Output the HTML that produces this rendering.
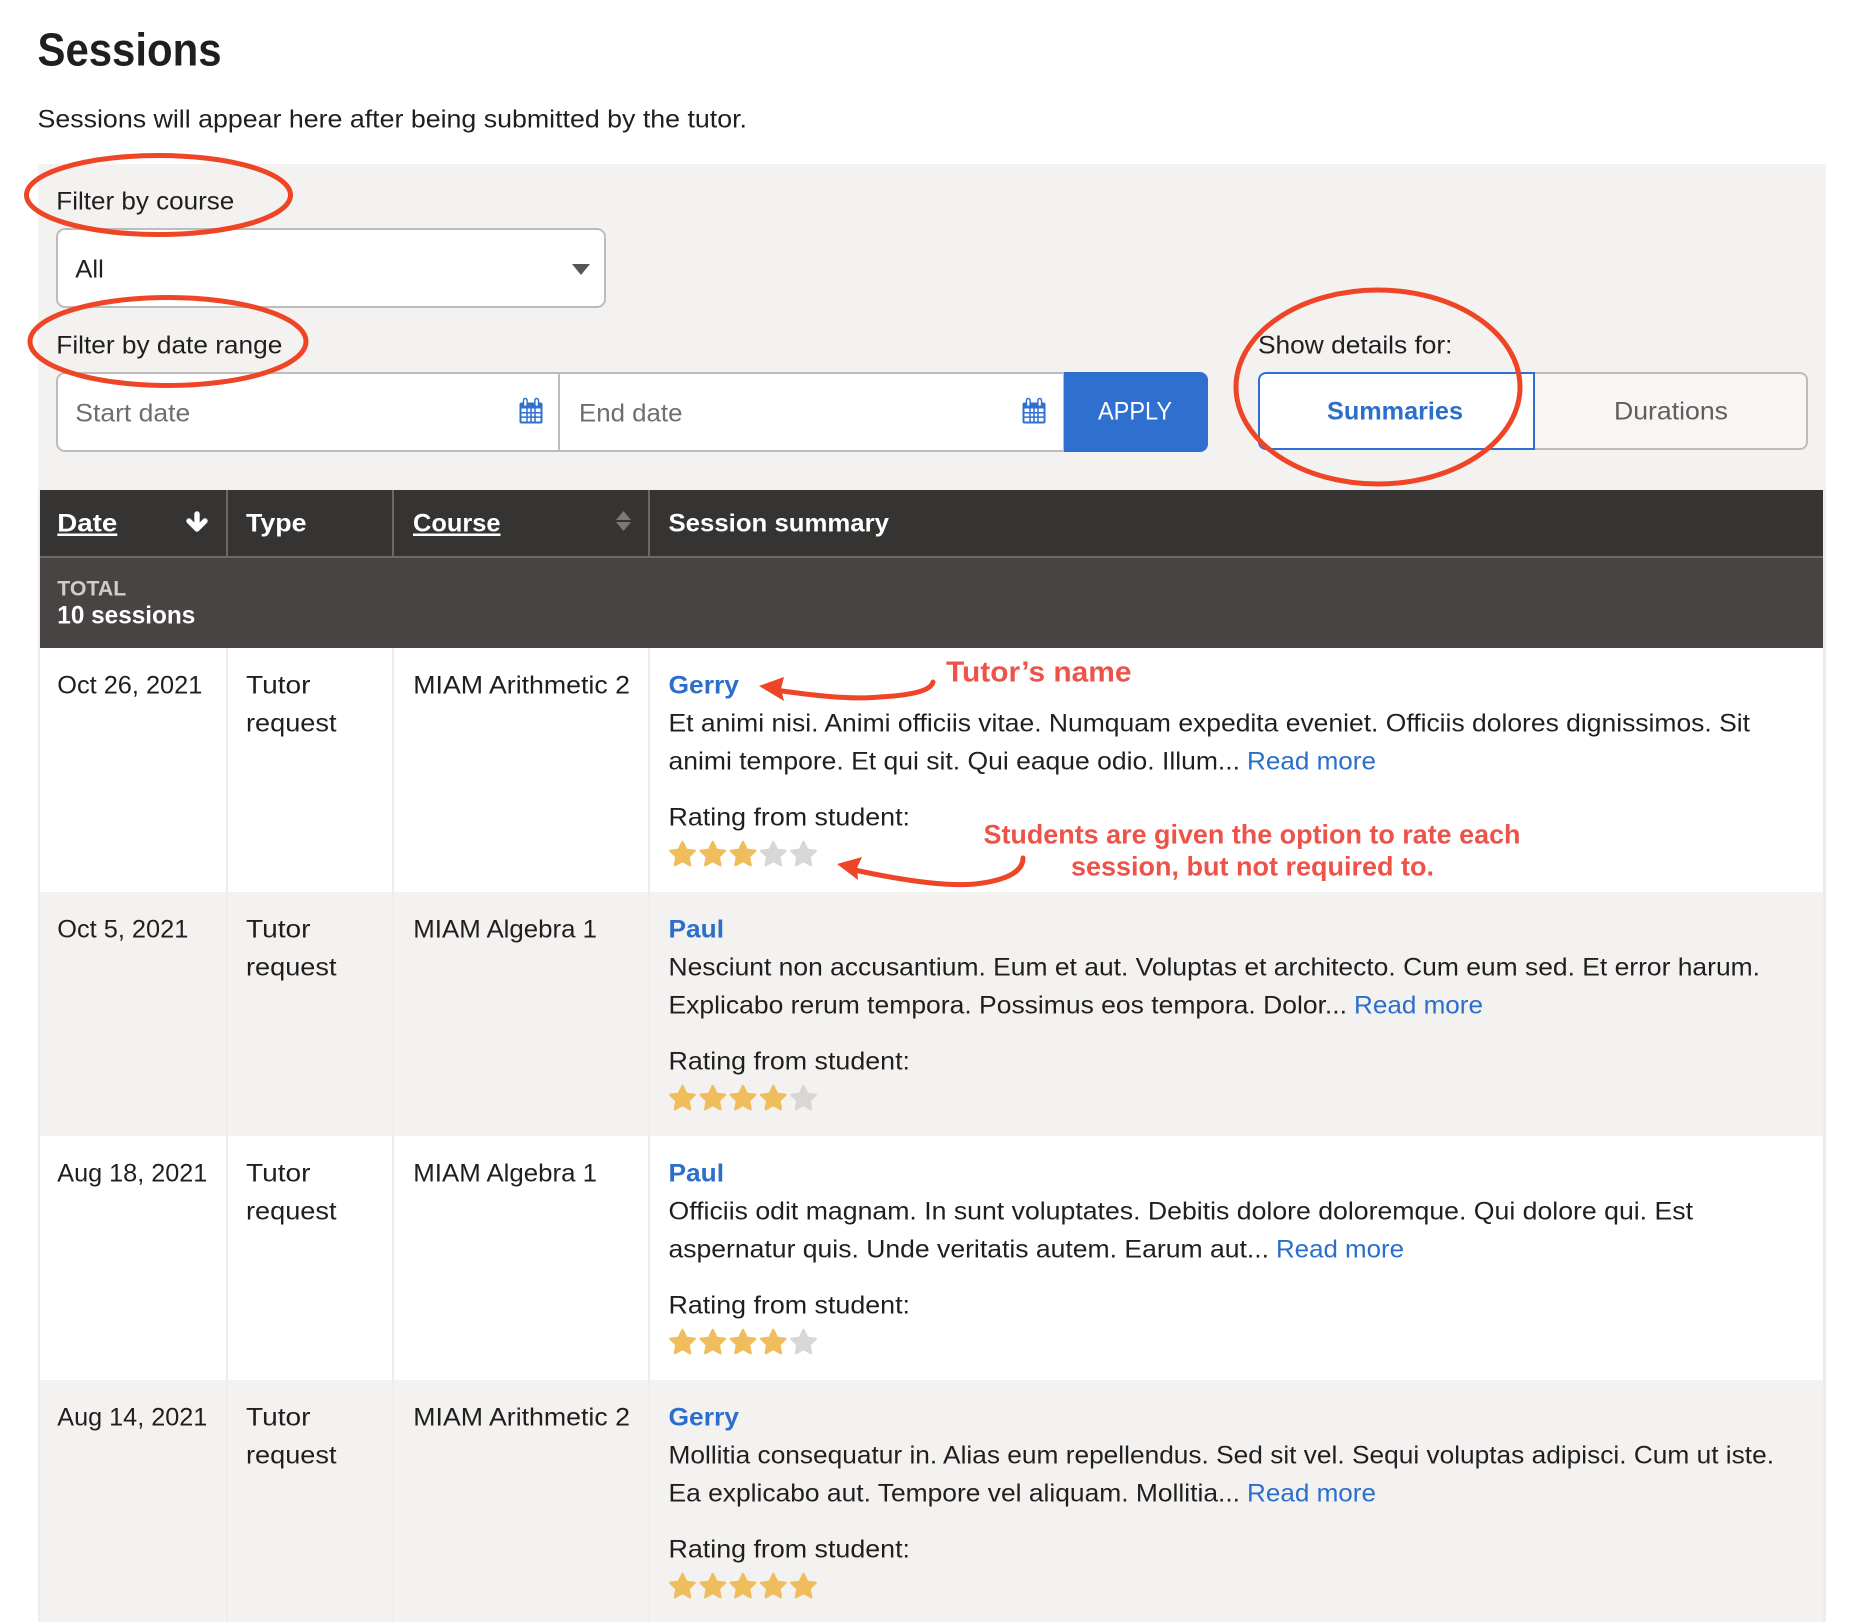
<!DOCTYPE html>
<html lang="en"><head><meta charset="utf-8"><title>Sessions</title>
<style>
html,body{margin:0;padding:0;background:#fff;width:1866px;height:1622px;overflow:hidden}
svg{display:block}
text{font-family:"Liberation Sans",Arial,sans-serif;font-size:25px;fill:#201f1e;white-space:pre;transform:translateY(-.5px)}
.b{font-weight:700}
.l{fill:#2b6ecb}
.w{fill:#fff}
.p{fill:#6f6e6d}
.a{font-weight:700;fill:#ee5349;font-size:26.5px;transform:translateY(.7px)}
.u{text-decoration:underline}
</style></head><body>
<svg width="1866" height="1622" viewBox="0 0 1866 1622" xmlns="http://www.w3.org/2000/svg">
<defs>
<polygon id="star" points="0,-12 3.7,-4.2 12.2,-3.2 6,2.7 7.6,11.2 0,7 -7.6,11.2 -6,2.7 -12.2,-3.2 -3.7,-4.2" stroke-width="2.4" stroke-linejoin="round"/>
<g id="cal">
<rect x="0" y="4" width="23" height="21" rx="2" fill="#2f6fcf"/>
<rect x="2" y="10" width="19" height="13" fill="#fff"/>
<path d="M7.5 10v13M11.5 10v13M15.5 10v13M2 14.3h19M2 18.6h19" stroke="#2f6fcf" stroke-width="1.5"/>
<rect x="4" y="0" width="3.6" height="8" rx="1.8" fill="#fff" stroke="#2f6fcf" stroke-width="1.4"/>
<rect x="15.4" y="0" width="3.6" height="8" rx="1.8" fill="#fff" stroke="#2f6fcf" stroke-width="1.4"/>
</g>
</defs>

<!-- heading -->
<text x="37.5" y="66" class="b" style="font-size:46px" textLength="184" lengthAdjust="spacingAndGlyphs">Sessions</text>
<text x="37.5" y="128" textLength="709.5" lengthAdjust="spacingAndGlyphs">Sessions will appear here after being submitted by the tutor.</text>

<!-- filter panel -->
<rect x="38" y="164" width="1788" height="326" fill="#f3f2f1"/>
<text x="56.3" y="210" textLength="178" lengthAdjust="spacingAndGlyphs">Filter by course</text>
<rect x="57" y="229" width="548" height="78" rx="8" fill="#fff" stroke="#bdbcbb" stroke-width="2"/>
<text x="75.3" y="278" textLength="28.5" lengthAdjust="spacingAndGlyphs">All</text>
<polygon points="572,264 590,264 581,275" fill="#575655"/>

<text x="56.3" y="354" textLength="226" lengthAdjust="spacingAndGlyphs">Filter by date range</text>
<path d="M1064 373H65a8 8 0 0 0-8 8v62a8 8 0 0 0 8 8H1064z" fill="#fff" stroke="#bdbcbb" stroke-width="2"/>
<rect x="558" y="373" width="2" height="78" fill="#bdbcbb"/>
<text x="75.3" y="422" class="p" textLength="115" lengthAdjust="spacingAndGlyphs">Start date</text>
<text x="579" y="422" class="p" textLength="103.5" lengthAdjust="spacingAndGlyphs">End date</text>
<use href="#cal" x="519.5" y="398.5"/>
<use href="#cal" x="1022.5" y="398.5"/>
<path d="M1064 372H1200a8 8 0 0 1 8 8v64a8 8 0 0 1-8 8H1064z" fill="#2f6fcf"/>
<text x="1098" y="420" class="w" textLength="74" lengthAdjust="spacingAndGlyphs">APPLY</text>

<text x="1258" y="354" textLength="194.5" lengthAdjust="spacingAndGlyphs">Show details for:</text>
<path d="M1534 373H1800a7 7 0 0 1 7 7v62a7 7 0 0 1-7 7H1534z" fill="#f7f6f5" stroke="#bdbcbb" stroke-width="2"/>
<path d="M1534 373H1266a7 7 0 0 0-7 7v62a7 7 0 0 0 7 7H1534z" fill="#fff" stroke="#2f6fcf" stroke-width="2"/>
<text x="1327" y="420" class="b l" textLength="136" lengthAdjust="spacingAndGlyphs">Summaries</text>
<text x="1614" y="420" style="fill:#605e5c" textLength="114" lengthAdjust="spacingAndGlyphs">Durations</text>

<!-- table frame and rows -->
<rect x="38" y="490" width="1788" height="1132" fill="#f3f2f1"/>
<rect x="40" y="648" width="1783" height="244" fill="#fff"/>
<rect x="40" y="892" width="1783" height="244" fill="#f3f2f1"/>
<rect x="40" y="1136" width="1783" height="244" fill="#fff"/>
<rect x="40" y="1380" width="1783" height="242" fill="#f3f2f1"/>
<rect x="1823" y="490" width="3" height="1132" fill="#eeedec"/>
<rect x="38" y="490" width="2" height="1132" fill="#eeedec"/>
<rect x="226" y="648" width="2" height="974" fill="#eeedec"/>
<rect x="392" y="648" width="2" height="974" fill="#eeedec"/>
<rect x="648" y="648" width="2" height="974" fill="#eeedec"/>

<!-- header -->
<rect x="40" y="490" width="1783" height="66" fill="#353432"/>
<rect x="40" y="556" width="1783" height="2" fill="#6b6967"/>
<rect x="40" y="558" width="1783" height="90" fill="#474443"/>
<rect x="226" y="490" width="2" height="66" fill="#6b6967"/>
<rect x="392" y="490" width="2" height="66" fill="#6b6967"/>
<rect x="648" y="490" width="2" height="66" fill="#6b6967"/>
<text x="57.3" y="532" class="b w u" textLength="60" lengthAdjust="spacingAndGlyphs">Date</text>
<path d="M197 514v14M189 521l8 8 8-8" fill="none" stroke="#fff" stroke-width="5.4" stroke-linecap="round" stroke-linejoin="round"/>
<text x="246" y="532" class="b w" textLength="60.5" lengthAdjust="spacingAndGlyphs">Type</text>
<text x="413" y="532" class="b w u" textLength="87.5" lengthAdjust="spacingAndGlyphs">Course</text>
<polygon points="623.5,511 631,520 616,520" fill="#7a7977"/>
<polygon points="623.5,531 631,522 616,522" fill="#7a7977"/>
<text x="668.5" y="532" class="b w" textLength="220.5" lengthAdjust="spacingAndGlyphs">Session summary</text>
<text x="57.3" y="596" class="b" style="font-size:21.5px;fill:#cfcdcb" textLength="69" lengthAdjust="spacingAndGlyphs">TOTAL</text>
<text x="57.3" y="624" class="b w" textLength="138" lengthAdjust="spacingAndGlyphs">10 sessions</text>

<!-- row 1 -->
<text x="57.3" y="694" textLength="145" lengthAdjust="spacingAndGlyphs">Oct 26, 2021</text>
<text x="246" y="694" textLength="64.5" lengthAdjust="spacingAndGlyphs">Tutor</text>
<text x="246" y="732" textLength="90.5" lengthAdjust="spacingAndGlyphs">request</text>
<text x="413.3" y="694" textLength="216.7" lengthAdjust="spacingAndGlyphs">MIAM Arithmetic 2</text>
<text x="668.5" y="694" class="b l" textLength="70.5" lengthAdjust="spacingAndGlyphs">Gerry</text>
<text x="668.5" y="732" textLength="1081.5" lengthAdjust="spacingAndGlyphs">Et animi nisi. Animi officiis vitae. Numquam expedita eveniet. Officiis dolores dignissimos. Sit</text>
<text x="668.5" y="770" textLength="571.5" lengthAdjust="spacingAndGlyphs">animi tempore. Et qui sit. Qui eaque odio. Illum...</text>
<text x="1247" y="770" class="l" textLength="129" lengthAdjust="spacingAndGlyphs">Read more</text>
<text x="668.5" y="826" textLength="241.5" lengthAdjust="spacingAndGlyphs">Rating from student:</text>
<g fill="#f0bd5c" stroke="#f0bd5c"><use href="#star" x="682.5" y="854"/><use href="#star" x="712.8" y="854"/><use href="#star" x="743" y="854"/></g>
<g fill="#d9d7d6" stroke="#d9d7d6"><use href="#star" x="773.3" y="854"/><use href="#star" x="803.5" y="854"/></g>

<!-- row 2 -->
<text x="57.3" y="938" textLength="131" lengthAdjust="spacingAndGlyphs">Oct 5, 2021</text>
<text x="246" y="938" textLength="64.5" lengthAdjust="spacingAndGlyphs">Tutor</text>
<text x="246" y="976" textLength="90.5" lengthAdjust="spacingAndGlyphs">request</text>
<text x="413.3" y="938" textLength="183.7" lengthAdjust="spacingAndGlyphs">MIAM Algebra 1</text>
<text x="668.5" y="938" class="b l" textLength="55.5" lengthAdjust="spacingAndGlyphs">Paul</text>
<text x="668.5" y="976" textLength="1091.5" lengthAdjust="spacingAndGlyphs">Nesciunt non accusantium. Eum et aut. Voluptas et architecto. Cum eum sed. Et error harum.</text>
<text x="668.5" y="1014" textLength="678.5" lengthAdjust="spacingAndGlyphs">Explicabo rerum tempora. Possimus eos tempora. Dolor...</text>
<text x="1354" y="1014" class="l" textLength="129" lengthAdjust="spacingAndGlyphs">Read more</text>
<text x="668.5" y="1070" textLength="241.5" lengthAdjust="spacingAndGlyphs">Rating from student:</text>
<g fill="#f0bd5c" stroke="#f0bd5c"><use href="#star" x="682.5" y="1098"/><use href="#star" x="712.8" y="1098"/><use href="#star" x="743" y="1098"/><use href="#star" x="773.3" y="1098"/></g>
<g fill="#d9d7d6" stroke="#d9d7d6"><use href="#star" x="803.5" y="1098"/></g>

<!-- row 3 -->
<text x="57.3" y="1182" textLength="150" lengthAdjust="spacingAndGlyphs">Aug 18, 2021</text>
<text x="246" y="1182" textLength="64.5" lengthAdjust="spacingAndGlyphs">Tutor</text>
<text x="246" y="1220" textLength="90.5" lengthAdjust="spacingAndGlyphs">request</text>
<text x="413.3" y="1182" textLength="183.7" lengthAdjust="spacingAndGlyphs">MIAM Algebra 1</text>
<text x="668.5" y="1182" class="b l" textLength="55.5" lengthAdjust="spacingAndGlyphs">Paul</text>
<text x="668.5" y="1220" textLength="1024.5" lengthAdjust="spacingAndGlyphs">Officiis odit magnam. In sunt voluptates. Debitis dolore doloremque. Qui dolore qui. Est</text>
<text x="668.5" y="1258" textLength="600.5" lengthAdjust="spacingAndGlyphs">aspernatur quis. Unde veritatis autem. Earum aut...</text>
<text x="1276" y="1258" class="l" textLength="128" lengthAdjust="spacingAndGlyphs">Read more</text>
<text x="668.5" y="1314" textLength="241.5" lengthAdjust="spacingAndGlyphs">Rating from student:</text>
<g fill="#f0bd5c" stroke="#f0bd5c"><use href="#star" x="682.5" y="1342"/><use href="#star" x="712.8" y="1342"/><use href="#star" x="743" y="1342"/><use href="#star" x="773.3" y="1342"/></g>
<g fill="#d9d7d6" stroke="#d9d7d6"><use href="#star" x="803.5" y="1342"/></g>

<!-- row 4 -->
<text x="57.3" y="1426" textLength="150" lengthAdjust="spacingAndGlyphs">Aug 14, 2021</text>
<text x="246" y="1426" textLength="64.5" lengthAdjust="spacingAndGlyphs">Tutor</text>
<text x="246" y="1464" textLength="90.5" lengthAdjust="spacingAndGlyphs">request</text>
<text x="413.3" y="1426" textLength="216.7" lengthAdjust="spacingAndGlyphs">MIAM Arithmetic 2</text>
<text x="668.5" y="1426" class="b l" textLength="70.5" lengthAdjust="spacingAndGlyphs">Gerry</text>
<text x="668.5" y="1464" textLength="1105.5" lengthAdjust="spacingAndGlyphs">Mollitia consequatur in. Alias eum repellendus. Sed sit vel. Sequi voluptas adipisci. Cum ut iste.</text>
<text x="668.5" y="1502" textLength="571.5" lengthAdjust="spacingAndGlyphs">Ea explicabo aut. Tempore vel aliquam. Mollitia...</text>
<text x="1247" y="1502" class="l" textLength="129" lengthAdjust="spacingAndGlyphs">Read more</text>
<text x="668.5" y="1558" textLength="241.5" lengthAdjust="spacingAndGlyphs">Rating from student:</text>
<g fill="#f0bd5c" stroke="#f0bd5c"><use href="#star" x="682.5" y="1586"/><use href="#star" x="712.8" y="1586"/><use href="#star" x="743" y="1586"/><use href="#star" x="773.3" y="1586"/><use href="#star" x="803.5" y="1586"/></g>

<!-- annotations -->
<g fill="none" stroke="#ee4527" stroke-width="5">
<ellipse cx="158.5" cy="195" rx="132" ry="39.5"/>
<ellipse cx="168" cy="341.5" rx="138" ry="44"/>
<ellipse cx="1378" cy="387" rx="142" ry="97"/>
<path d="M775 690C810 695 850 700 880 697C915 695 931 690 933 682" stroke-width="5" stroke-linecap="round"/>
<path d="M850 869C900 880 945 887 975 884C1010 880 1023 870 1023 858" stroke-width="5" stroke-linecap="round"/>
</g>
<polygon points="759,686 784,677 781,689 784,701" fill="#ee4527"/>
<polygon points="837,864 862,857 857,868 858,880" fill="#ee4527"/>
<text x="946" y="681" class="a" style="font-size:29px" textLength="185.5" lengthAdjust="spacingAndGlyphs">Tutor’s name</text>
<text x="983.5" y="843" class="a" textLength="537" lengthAdjust="spacingAndGlyphs">Students are given the option to rate each</text>
<text x="1071" y="875" class="a" textLength="363" lengthAdjust="spacingAndGlyphs">session, but not required to.</text>
</svg>
</body></html>
